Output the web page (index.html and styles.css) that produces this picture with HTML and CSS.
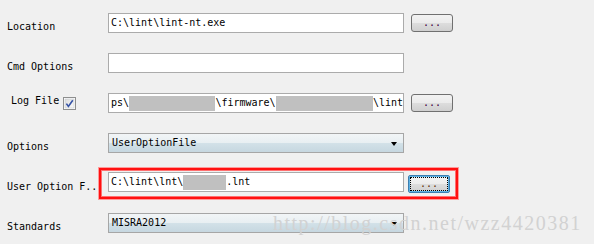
FILE: index.html
```html
<!DOCTYPE html>
<html>
<head>
<meta charset="utf-8">
<link rel="stylesheet" href="styles.css">
</head>
<body>
<div class="form">
  <div class="row">
    <div class="label">Location</div>
    <div class="field"><span>C:\lint\lint-nt.exe</span></div>
    <div class="btn"><span>...</span></div>
  </div>
  <div class="row">
    <div class="label">Cmd Options</div>
    <div class="field"></div>
  </div>
  <div class="row">
    <div class="label label-log">Log File
      <svg class="check" width="13" height="13" viewBox="0 0 13 13">
        <defs><linearGradient id="cb" x1="0" y1="0" x2="1" y2="1"><stop offset="0" stop-color="#dcdcdc"/><stop offset="1" stop-color="#fbfbfb"/></linearGradient></defs>
        <rect x="0.5" y="0.5" width="12" height="12" fill="#fff" stroke="#8e8f8f"/>
        <rect x="2" y="2" width="9" height="9" fill="url(#cb)" stroke="#c4c8cc" stroke-width="0.6"/>
        <path d="M3.4 6.6 L5.4 9.4 L9.8 3.2" fill="none" stroke="#3553a6" stroke-width="1.6"/>
      </svg>
    </div>
    <div class="field"><span>ps\</span><i class="mask m1"></i><span>\firmware\</span><i class="mask m2"></i><span>\lint</span></div>
    <div class="btn"><span>...</span></div>
  </div>
  <div class="row">
    <div class="label">Options</div>
    <div class="select"><span>UserOptionFile</span><i class="arrow"></i></div>
  </div>
  <div class="row row-uof">
    <div class="label label-uof">User Option F...</div>
    <div class="highlight">
      <div class="field"><span>C:\lint\lnt\</span><i class="mask m3"></i><span>.lnt</span></div>
      <div class="btn btn-focus"><span>...</span></div>
    </div>
  </div>
  <div class="row">
    <div class="label">Standards</div>
    <div class="select"><span>MISRA2012</span><i class="arrow"></i></div>
  </div>
</div>
<div class="watermark">http://blog.csdn.net/wzz4420381</div>
</body>
</html>
```
FILE: styles.css
```css
html, body {
  margin: 0;
  padding: 0;
  background: #f0f0f0;
}
body {
  width: 594px;
  height: 244px;
  overflow: hidden;
  position: relative;
  font-family: "DejaVu Sans Mono", "Liberation Mono", monospace;
  font-size: 10px;
  color: #000;
}
.form {
  padding: 3px 0 0 7px;
  display: flex;
  flex-direction: column;
}
.row {
  height: 40px;
  display: flex;
  align-items: center;
}
.label {
  width: 101px;
  line-height: 12px;
  padding-top: 7px;
  white-space: pre;
  flex: none;
}
.label-log {
  display: flex;
  align-items: center;
  padding-left: 4px;
  width: 97px;
}
.check {
  margin-left: 4px;
  margin-top: -6px;
}
.label-uof {
  width: 92px;
}
.field {
  width: 296px;
  height: 20px;
  box-sizing: border-box;
  border: 1px solid #ababab;
  background: #fff;
  display: flex;
  align-items: center;
  padding-left: 2px;
  white-space: pre;
  line-height: 12px;
  flex: none;
}
.mask {
  display: block;
  height: 15px;
  background: #c0c0c0;
  margin-top: 1px;
}
.m1 { width: 87px; }
.m2 { width: 98px; }
.m3 { width: 43px; }
.btn {
  margin-left: 7px;
  width: 42px;
  height: 18px;
  box-sizing: border-box;
  border: 1px solid #707070;
  border-radius: 3px;
  background: linear-gradient(#f2f2f2, #ebebeb 50%, #dddddd 50%, #cfcfcf);
  display: flex;
  justify-content: center;
  align-items: flex-end;
  color: #400040;
  line-height: 10px;
  flex: none;
}
.btn span {
  padding-bottom: 3px;
}
.btn-focus {
  margin-left: 4px;
  margin-top: 3px;
  border: 1px solid #3c7fb1;
  border-radius: 2px;
  box-shadow: inset 0 0 0 1px #5fb2e4;
  outline: 1px dotted #000;
  outline-offset: -3px;
  background: linear-gradient(#f4f4f4, #ececec 50%, #dedede 50%, #d0d0d0);
  color: #603000;
}
.select {
  position: relative;
  width: 296px;
  height: 20px;
  box-sizing: border-box;
  border: 1px solid #a6a6a6;
  background: linear-gradient(#f2f5f7, #e8eff2 48%, #d2e1e8 52%, #c6d7e0);
  display: flex;
  align-items: center;
  padding-left: 3px;
  line-height: 12px;
  flex: none;
}
.arrow {
  position: absolute;
  right: 6px;
  top: 8px;
  width: 0;
  height: 0;
  border-left: 3.5px solid transparent;
  border-right: 3.5px solid transparent;
  border-top: 4px solid #000;
}
.highlight {
  display: flex;
  align-items: flex-start;
  border: 2px solid #ff1010;
  box-shadow: 0 0 0 1px #ff9a9a, inset 0 0 0 1px #ff7070;
  padding: 2px 6px 4px 7px;
  margin-top: 1px;
}
.watermark {
  position: absolute;
  left: 273px;
  top: 212px;
  font-family: "Liberation Serif", serif;
  font-size: 20px;
  letter-spacing: 1.5px;
  color: #d2d2d2;
  line-height: 22px;
  white-space: nowrap;
}
```
